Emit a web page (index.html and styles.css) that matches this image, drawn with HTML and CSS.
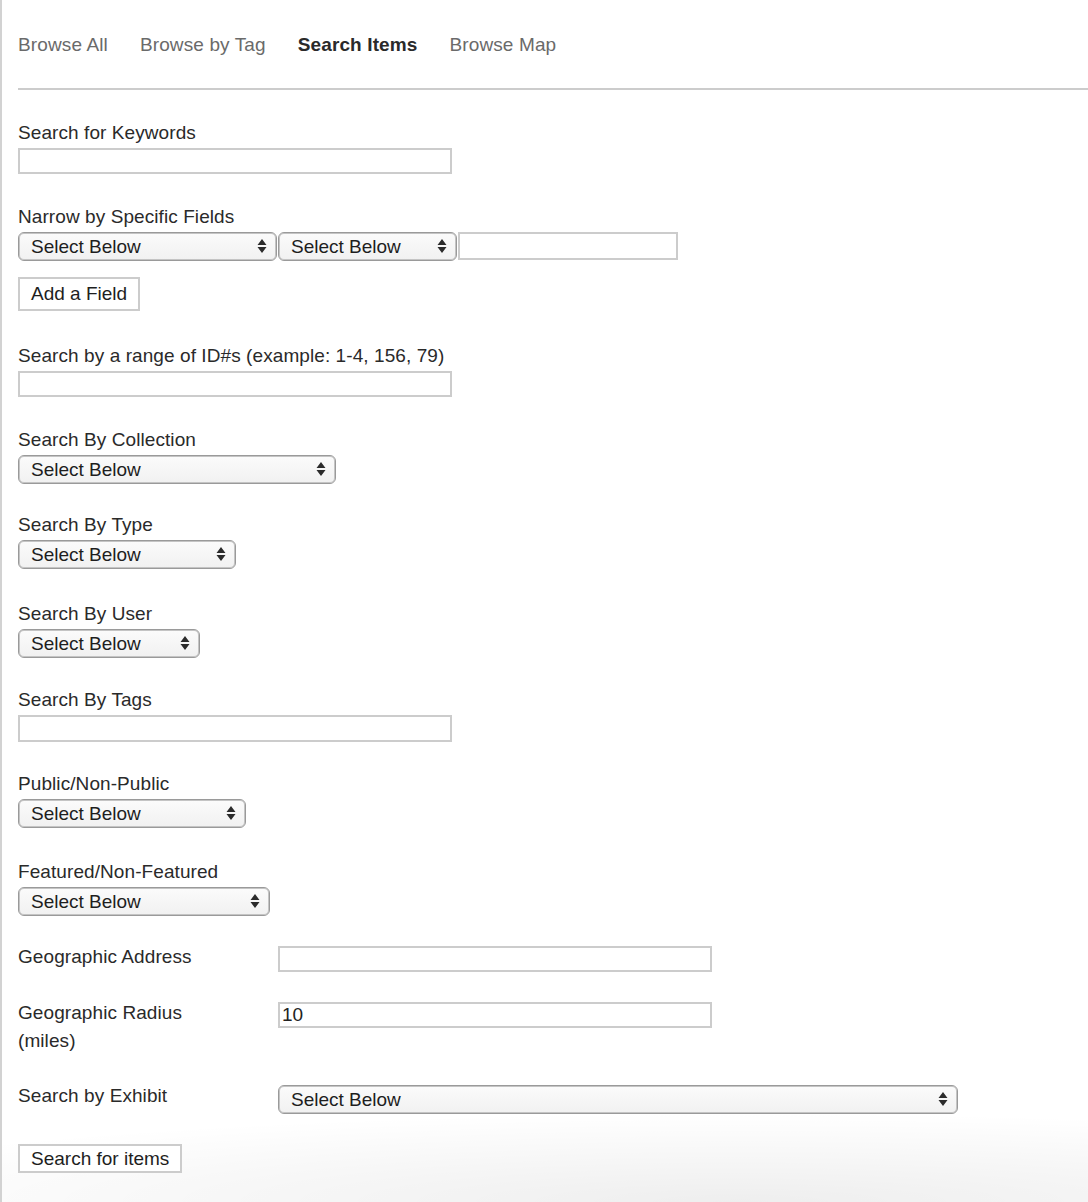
FILE: index.html
```html
<!DOCTYPE html>
<html lang="en">
<head>
<meta charset="utf-8">
<title>Search Items</title>
<link rel="stylesheet" href="styles.css">
</head>
<body>
<div class="page">
  <nav class="tabs">
    <a class="tab" href="#">Browse All</a>
    <a class="tab" href="#">Browse by Tag</a>
    <a class="tab active" href="#">Search Items</a>
    <a class="tab" href="#">Browse Map</a>
  </nav>
  <hr class="rule">

  <form class="search-form">
    <div class="field">
      <label class="label">Search for Keywords</label>
      <input class="text w434" type="text">
    </div>

    <div class="field">
      <label class="label">Narrow by Specific Fields</label>
      <div class="narrow-row">
        <span class="sel w259"><select><option>Select Below</option></select><svg class="arrows" width="10" height="16" viewBox="0 0 10 16"><path d="M5 1 L9.5 7 H0.5 Z M5 15 L9.5 9 H0.5 Z" fill="#2b2b2b"/></svg></span><span class="sel w179"><select><option>Select Below</option></select><svg class="arrows" width="10" height="16" viewBox="0 0 10 16"><path d="M5 1 L9.5 7 H0.5 Z M5 15 L9.5 9 H0.5 Z" fill="#2b2b2b"/></svg></span><input class="text w220 narrow-input" type="text">
      </div>
      <button class="btn add-btn" type="button">Add a Field</button>
    </div>

    <div class="field">
      <label class="label">Search by a range of ID#s (example: 1-4, 156, 79)</label>
      <input class="text w434" type="text">
    </div>

    <div class="field gap-29">
      <label class="label">Search By Collection</label>
      <span class="sel w318"><select><option>Select Below</option></select><svg class="arrows" width="10" height="16" viewBox="0 0 10 16"><path d="M5 1 L9.5 7 H0.5 Z M5 15 L9.5 9 H0.5 Z" fill="#2b2b2b"/></svg></span>
    </div>

    <div class="field gap-33">
      <label class="label">Search By Type</label>
      <span class="sel w218"><select><option>Select Below</option></select><svg class="arrows" width="10" height="16" viewBox="0 0 10 16"><path d="M5 1 L9.5 7 H0.5 Z M5 15 L9.5 9 H0.5 Z" fill="#2b2b2b"/></svg></span>
    </div>

    <div class="field gap-30">
      <label class="label">Search By User</label>
      <span class="sel w182"><select><option>Select Below</option></select><svg class="arrows" width="10" height="16" viewBox="0 0 10 16"><path d="M5 1 L9.5 7 H0.5 Z M5 15 L9.5 9 H0.5 Z" fill="#2b2b2b"/></svg></span>
    </div>

    <div class="field gap-30">
      <label class="label">Search By Tags</label>
      <input class="text w434 tall" type="text">
    </div>

    <div class="field gap-32">
      <label class="label">Public/Non-Public</label>
      <span class="sel w228"><select><option>Select Below</option></select><svg class="arrows" width="10" height="16" viewBox="0 0 10 16"><path d="M5 1 L9.5 7 H0.5 Z M5 15 L9.5 9 H0.5 Z" fill="#2b2b2b"/></svg></span>
    </div>

    <div class="field">
      <label class="label">Featured/Non-Featured</label>
      <span class="sel w252"><select><option>Select Below</option></select><svg class="arrows" width="10" height="16" viewBox="0 0 10 16"><path d="M5 1 L9.5 7 H0.5 Z M5 15 L9.5 9 H0.5 Z" fill="#2b2b2b"/></svg></span>
    </div>

    <div class="geo-grid">
      <label class="geo-label">Geographic Address</label>
      <div class="geo-control"><input class="text w434" type="text"></div>

      <label class="geo-label">Geographic Radius (miles)</label>
      <div class="geo-control"><input class="text w434" type="text" value="10"></div>

      <label class="geo-label">Search by Exhibit</label>
      <div class="geo-control"><span class="sel w680"><select><option>Select Below</option></select><svg class="arrows" width="10" height="16" viewBox="0 0 10 16"><path d="M5 1 L9.5 7 H0.5 Z M5 15 L9.5 9 H0.5 Z" fill="#2b2b2b"/></svg></span></div>
    </div>

    <button class="btn submit-btn" type="button">Search for items</button>
  </form>
</div>
</body>
</html>
```

FILE: styles.css
```css
html {
  background: #ffffff;
}

body {
  margin: 0;
  font-family: "Liberation Sans", Arial, Helvetica, sans-serif;
  font-size: 19px;
  letter-spacing: 0.08px;
  color: #2a2a2a;
}

.page {
  min-height: 1202px;
  box-sizing: border-box;
  border-left: 2px solid #d2d2d2;
  padding: 33px 0 0 16px;
  background:
    radial-gradient(ellipse 1000px 90px at 68% 100%, rgba(0, 0, 0, 0.065), rgba(0, 0, 0, 0) 100%);
}

.tabs {
  display: flex;
  gap: 32px;
  line-height: 24px;
  letter-spacing: 0.12px;
}

.tab {
  color: #6a6a6a;
  text-decoration: none;
}

.tab.active {
  color: #2a2a2a;
  font-weight: bold;
}

.rule {
  margin: 31px 0 0 0;
  border: 0;
  height: 2px;
  background: #cccccc;
}

.search-form {
  display: flex;
  flex-direction: column;
  align-items: flex-start;
  padding-top: 31px;
}

.field {
  display: flex;
  flex-direction: column;
  align-items: flex-start;
  margin-bottom: 31px;
}

.field.gap-29 { margin-bottom: 29px; }
.field.gap-30 { margin-bottom: 30px; }
.field.gap-32 { margin-bottom: 32px; }
.field.gap-33 { margin-bottom: 33px; }

.label {
  display: block;
  line-height: 24px;
  margin-bottom: 3px;
  color: #2a2a2a;
}

.text {
  box-sizing: border-box;
  height: 26px;
  border: 2px solid #cccccc;
  border-radius: 0;
  background: #ffffff;
  font-family: inherit;
  font-size: 19px;
  color: #222;
  padding: 0 2px;
  margin: 0;
  outline: none;
}

.text.tall {
  height: 27px;
}

.w434 { width: 434px; }
.w220 { width: 220px; }

.narrow-row {
  display: flex;
  align-items: flex-start;
  gap: 1px;
}

.narrow-input {
  height: 28px;
}

.sel {
  position: relative;
  display: inline-block;
  height: 29px;
}

.sel select {
  -webkit-appearance: none;
  appearance: none;
  box-sizing: border-box;
  width: 100%;
  height: 29px;
  margin: 0;
  padding: 0 30px 0 12px;
  border: 1px solid #9a9a9a;
  border-radius: 6px;
  background: linear-gradient(#fbfbfb, #f1f1f1);
  box-shadow: inset 0 0 0 1px #c4c4c4;
  font-family: inherit;
  font-size: 19px;
  line-height: 27px;
  color: #1e1e1e;
  outline: none;
}

.arrows {
  position: absolute;
  right: 10px;
  top: 6px;
  pointer-events: none;
}

.w259 { width: 259px; }
.w179 { width: 179px; }
.w318 { width: 318px; }
.w218 { width: 218px; }
.w182 { width: 182px; }
.w228 { width: 228px; }
.w252 { width: 252px; }
.w680 { width: 680px; }

.btn {
  box-sizing: border-box;
  border: 2px solid #cccccc;
  border-radius: 0;
  background: #ffffff;
  font-family: inherit;
  font-size: 19px;
  letter-spacing: 0;
  color: #1e1e1e;
  margin: 0;
  cursor: pointer;
}

.add-btn {
  margin-top: 16px;
  margin-bottom: 2px;
  height: 34px;
  padding: 0 11px;
}

.geo-grid {
  display: grid;
  grid-template-columns: 210px auto;
  column-gap: 50px;
  row-gap: 27px;
  align-items: start;
  margin-top: -4px;
}

.geo-label {
  line-height: 28px;
  color: #2a2a2a;
}

.geo-control {
  padding-top: 3px;
}

.geo-control .sel {
  display: block;
}

.submit-btn {
  margin-top: 30px;
  height: 29px;
  padding: 0 11px;
}
```
